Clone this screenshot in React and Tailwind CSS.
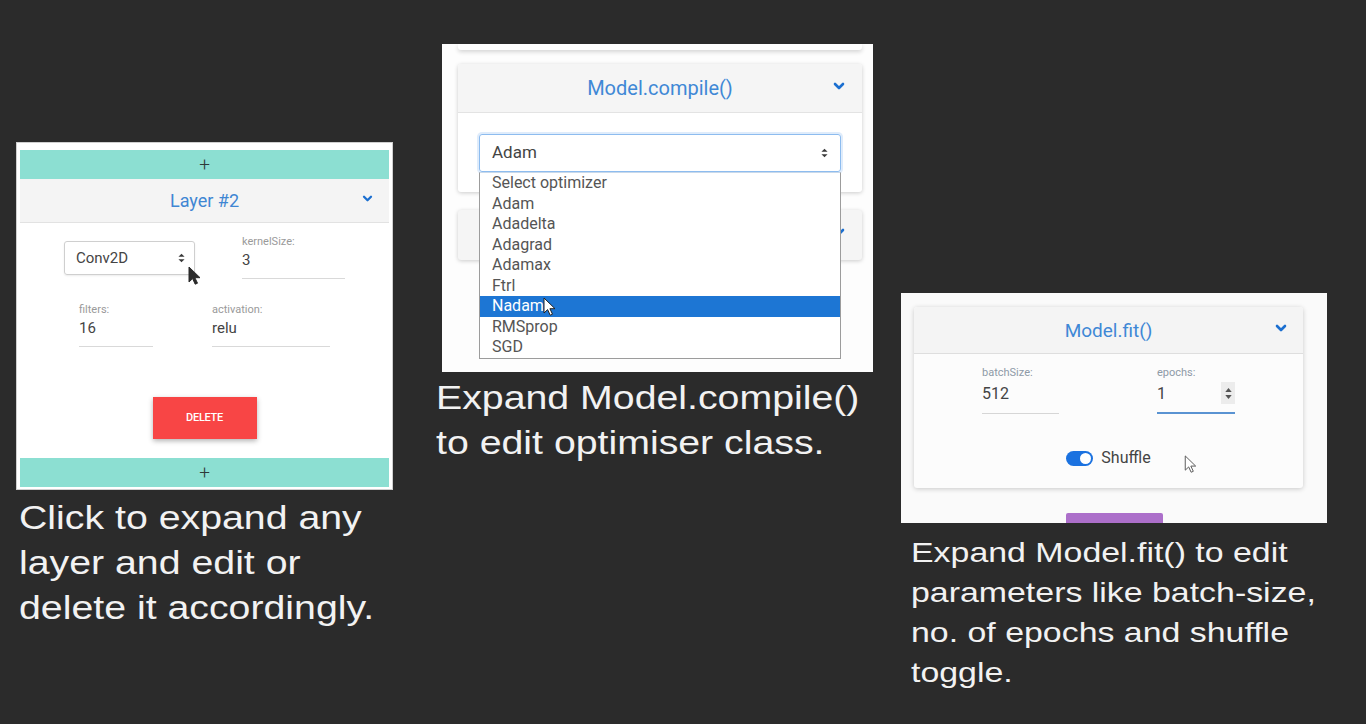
const ui = { fontFamily: 'Roboto, "Noto Sans", sans-serif' };
const slide = { fontFamily: '"Liberation Sans", Arial, sans-serif' };

const Chevron = ({ className }) => (
  <svg viewBox="0 0 12 8" className={className} fill="none" stroke="#1b6fd0" strokeWidth="2.6" strokeLinecap="round" strokeLinejoin="round">
    <path d="M2 2l4 4 4-4" />
  </svg>
);

const SortArrows = ({ className }) => (
  <svg viewBox="0 0 8 11" className={className} fill="#3a3a3a">
    <path d="M0.5 4.2L4 0.6l3.5 3.6z" />
    <path d="M0.5 6.8L4 10.4l3.5-3.6z" />
  </svg>
);

const Cursor = ({ className, fill = '#1e1e1e', stroke = '#1e1e1e' }) => (
  <svg viewBox="0 0 12 19" className={className} fill={fill} stroke={stroke} strokeWidth="1" strokeLinejoin="round">
    <path d="M1 1v15l3.6-3.4 2.6 5.6 2.3-1-2.6-5.5H12z" />
  </svg>
);

const PlusBar = () => (
  <div className="h-[29px] bg-[#8cdfd2] flex items-center justify-center">
    <span className="text-[19px] leading-none font-light text-[#2f3a38]">+</span>
  </div>
);

const Field = ({ label, value, width }) => (
  <div className={`${width} border-b border-[#d9d9d9] pb-[8px]`}>
    <div className="text-[11px] leading-[13px] text-[#9a9a9a]">{label}</div>
    <div className="mt-[2px] text-[15px] leading-[20px] text-[#444]">{value}</div>
  </div>
);

const LayerShot = () => (
  <div className="h-[348px] bg-white border border-[#cfcfcf] px-[3px] pt-[7px] pb-[2px] flex flex-col" style={ui}>
    <PlusBar />
    <div className="relative h-[44px] bg-[#f4f4f4] border-b border-[#e2e2e2] flex items-center justify-center">
      <span className="text-[18px] text-[#3f86d3]">Layer #2</span>
      <Chevron className="absolute right-[16px] top-[16px] w-[11px] h-[7px]" />
    </div>
    <div className="relative flex-1 bg-white">
      <div className="flex items-start pl-[44px]">
        <div className="mt-[18px] w-[131px] h-[34px] border border-[#cfcfcf] rounded-[3px] shadow-[0_1px_2px_rgba(0,0,0,0.08)] flex items-center justify-between pl-[11px] pr-[9px]">
          <span className="text-[15px] text-[#444]">Conv2D</span>
          <SortArrows className="w-[7px] h-[10px]" />
        </div>
        <div className="ml-[47px] mt-[12px]">
          <Field label="kernelSize:" value="3" width="w-[103px]" />
        </div>
      </div>
      <div className="flex items-start pl-[59px] mt-[24px]">
        <Field label="filters:" value="16" width="w-[74px]" />
        <div className="ml-[59px]">
          <Field label="activation:" value="relu" width="w-[118px]" />
        </div>
      </div>
      <div className="flex justify-center mt-[50px]">
        <div className="w-[104px] h-[42px] bg-[#f84545] shadow-[0_2px_5px_rgba(0,0,0,0.3)] flex items-center justify-center text-[11px] font-medium text-white tracking-tight">
          DELETE
        </div>
      </div>
      <Cursor className="absolute left-[168px] top-[43px] w-[12px] h-[19px]" fill="#2a2a2a" stroke="#2a2a2a" />
    </div>
    <PlusBar />
  </div>
);

const optimizers = ['Select optimizer', 'Adam', 'Adadelta', 'Adagrad', 'Adamax', 'Ftrl', 'Nadam', 'RMSprop', 'SGD'];

const CompileShot = () => (
  <div className="h-[328px] bg-[#fdfdfd] overflow-hidden flex flex-col" style={ui}>
    <div className="ml-[16px] w-[404px] h-[6px] bg-white rounded-b-[3px] shadow-[0_2px_4px_rgba(0,0,0,0.16)]" />
    <div className="mt-[14px] ml-[16px] w-[404px] bg-white rounded-[3px] shadow-[0_1px_4px_rgba(0,0,0,0.2)]">
      <div className="relative h-[49px] bg-[#f5f5f5] border-b border-[#e3e3e3] rounded-t-[3px] flex items-center justify-center">
        <span className="text-[20px] text-[#3f88d6]">Model.compile()</span>
        <Chevron className="absolute right-[17px] top-[18px] w-[12px] h-[8px]" />
      </div>
      <div className="px-[21px] pt-[21px] pb-[20px]">
        <div className="relative">
          <div className="h-[38px] border border-[#8dbcef] rounded-[3px] shadow-[0_0_0_2px_rgba(128,180,240,0.25)] flex items-center justify-between pl-[12px] pr-[12px]">
            <span className="text-[17px] text-[#444]">Adam</span>
            <SortArrows className="w-[7px] h-[10px]" />
          </div>
          <div className="absolute left-0 top-full z-10 w-full bg-white border border-[#9c9c9c] border-t-[#c9d9ea]">
            {optimizers.map((o) => (
              <div
                key={o}
                className={`h-[20.5px] leading-[20.5px] pl-[12px] text-[16px] ${o === 'Nadam' ? 'bg-[#1d76d4] text-white' : 'text-[#555]'}`}
              >
                {o}
              </div>
            ))}
            <Cursor className="absolute left-[63px] top-[124px] w-[12px] h-[19px]" fill="#ffffff" stroke="#222" />
          </div>
        </div>
      </div>
    </div>
    <div className="relative mt-[18px] ml-[16px] w-[404px] h-[50px] bg-[#f5f5f5] rounded-[3px] shadow-[0_1px_4px_rgba(0,0,0,0.2)]">
      <Chevron className="absolute right-[17px] top-[18px] w-[12px] h-[8px]" />
    </div>
  </div>
);

const FitShot = () => (
  <div className="relative h-[230px] bg-[#fafafa] overflow-hidden" style={ui}>
    <div className="mt-[14px] ml-[13px] w-[389px] h-[181px] bg-[#fcfcfc] rounded-[3px] shadow-[0_1px_5px_rgba(0,0,0,0.2)]">
      <div className="relative h-[47px] bg-[#f4f4f4] border-b border-[#dedede] rounded-t-[3px] flex items-center justify-center">
        <span className="mt-[3px] text-[19px] text-[#3f88d6]">Model.fit()</span>
        <Chevron className="absolute right-[16px] top-[17px] w-[12px] h-[8px]" />
      </div>
      <div className="flex items-start pl-[68px] pt-[12px]">
        <div className="w-[77px] border-b border-[#d6d6d6] pb-[8px]">
          <div className="text-[11px] leading-[13px] text-[#8e9aa7]">batchSize:</div>
          <div className="mt-[4px] text-[16px] leading-[22px] text-[#444]">512</div>
        </div>
        <div className="relative ml-[98px] w-[78px] border-b-2 border-[#5a93d2] pb-[7px]">
          <div className="text-[11px] leading-[13px] text-[#8e9aa7]">epochs:</div>
          <div className="mt-[4px] text-[16px] leading-[22px] text-[#444]">1</div>
          <div className="absolute right-0 top-[16px] w-[14px] h-[22px] bg-[#ececec] flex flex-col items-center justify-center gap-[3px]">
            <svg viewBox="0 0 8 5" className="w-[7px] h-[4px]" fill="#555"><path d="M0 5L4 0l4 5z" /></svg>
            <svg viewBox="0 0 8 5" className="w-[7px] h-[4px]" fill="#555"><path d="M0 0l4 5 4-5z" /></svg>
          </div>
        </div>
      </div>
      <div className="mt-[34px] flex items-center justify-center gap-[8px]">
        <div className="w-[27px] h-[15px] rounded-full bg-[#1b72e0] flex items-center justify-end pr-[2px]">
          <div className="w-[11px] h-[11px] rounded-full bg-white" />
        </div>
        <span className="text-[16px] leading-[20px] text-[#444]">Shuffle</span>
      </div>
    </div>
    <div className="mt-[25px] ml-[165px] w-[97px] h-[12px] bg-[#ac6fca] rounded-t-[2px]" />
    <Cursor className="absolute left-[283px] top-[162px] w-[12px] h-[18px]" fill="#ffffff" stroke="#555" />
  </div>
);

export default function App() {
  return (
    <div className="w-[1366px] h-[724px] bg-[#2b2b2b] flex items-start overflow-hidden">
      <div className="ml-[16px] mt-[142px] w-[377px] shrink-0">
        <LayerShot />
        <p className="mt-[5px] ml-[3px] whitespace-nowrap text-[33px] leading-[45px] text-[#f2f2f2] scale-x-[1.19] origin-left" style={slide}>
          Click to expand any<br />layer and edit or<br />delete it accordingly.
        </p>
      </div>
      <div className="ml-[49px] mt-[44px] w-[431px] shrink-0">
        <CompileShot />
        <p className="mt-[3px] -ml-[6px] whitespace-nowrap text-[33px] leading-[45px] text-[#f2f2f2] scale-x-[1.19] origin-left" style={slide}>
          Expand Model.compile()<br />to edit optimiser class.
        </p>
      </div>
      <div className="ml-[28px] mt-[293px] w-[426px] shrink-0">
        <FitShot />
        <p className="mt-[10px] ml-[10px] whitespace-nowrap text-[28px] leading-[40px] text-[#f2f2f2] scale-x-[1.21] origin-left" style={slide}>
          Expand Model.fit() to edit<br />parameters like batch-size,<br />no. of epochs and shuffle<br />toggle.
        </p>
      </div>
    </div>
  );
}
